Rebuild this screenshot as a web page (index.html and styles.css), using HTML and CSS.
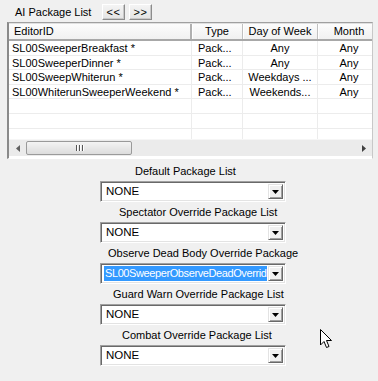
FILE: index.html
```html
<!DOCTYPE html>
<html>
<head>
<meta charset="utf-8">
<link rel="stylesheet" href="styles.css">
</head>
<body>
<div class="page">
  <div class="toolbar">
    <span class="title">AI Package List</span>
    <div class="navs">
      <button class="btn">&lt;&lt;</button>
      <button class="btn">&gt;&gt;</button>
    </div>
  </div>

  <div class="list">
    <div class="grid header">
      <div class="hcell c1">EditorID</div>
      <div class="hcell c2">Type</div>
      <div class="hcell c3">Day of Week</div>
      <div class="hcell c4">Month</div>
    </div>
    <div class="body">
      <div class="grid row"><div class="cell c1">SL00SweeperBreakfast *</div><div class="cell c2">Pack...</div><div class="cell c3">Any</div><div class="cell c4">Any</div></div>
      <div class="grid row"><div class="cell c1">SL00SweeperDinner *</div><div class="cell c2">Pack...</div><div class="cell c3">Any</div><div class="cell c4">Any</div></div>
      <div class="grid row"><div class="cell c1">SL00SweepWhiterun *</div><div class="cell c2">Pack...</div><div class="cell c3">Weekdays ...</div><div class="cell c4">Any</div></div>
      <div class="grid row"><div class="cell c1">SL00WhiterunSweeperWeekend *</div><div class="cell c2">Pack...</div><div class="cell c3">Weekends...</div><div class="cell c4">Any</div></div>
      <div class="grid row"><div class="cell c1"></div><div class="cell c2"></div><div class="cell c3"></div><div class="cell c4"></div></div>
      <div class="grid row"><div class="cell c1"></div><div class="cell c2"></div><div class="cell c3"></div><div class="cell c4"></div></div>
      <div class="grid row last"><div class="cell c1"></div><div class="cell c2"></div><div class="cell c3"></div><div class="cell c4"></div></div>
    </div>
    <div class="hscroll">
      <div class="arrow left"><svg width="4" height="7" viewBox="0 0 4 7"><path d="M4 0 L0 3.5 L4 7 Z" fill="#606060"/></svg></div>
      <div class="track">
        <div class="thumb"><span class="grip"></span><span class="grip"></span><span class="grip"></span></div>
      </div>
      <div class="arrow right"><svg width="4" height="7" viewBox="0 0 4 7"><path d="M0 0 L4 3.5 L0 7 Z" fill="#404040"/></svg></div>
    </div>
  </div>

  <div class="form">
    <div class="group">
      <div class="label l1">Default Package List</div>
      <div class="combo"><span class="val">NONE</span><span class="drop"><svg width="7" height="4" viewBox="0 0 7 4"><path d="M0 0 H7 L3.5 4 Z" fill="#000"/></svg></span></div>
    </div>
    <div class="group">
      <div class="label l2">Spectator Override Package List</div>
      <div class="combo"><span class="val">NONE</span><span class="drop"><svg width="7" height="4" viewBox="0 0 7 4"><path d="M0 0 H7 L3.5 4 Z" fill="#000"/></svg></span></div>
    </div>
    <div class="group">
      <div class="label l3">Observe Dead Body Override Package</div>
      <div class="combo"><span class="val sel">SL00SweeperObserveDeadOverrid</span><span class="drop"><svg width="7" height="4" viewBox="0 0 7 4"><path d="M0 0 H7 L3.5 4 Z" fill="#000"/></svg></span></div>
    </div>
    <div class="group">
      <div class="label l4">Guard Warn Override Package List</div>
      <div class="combo"><span class="val">NONE</span><span class="drop"><svg width="7" height="4" viewBox="0 0 7 4"><path d="M0 0 H7 L3.5 4 Z" fill="#000"/></svg></span></div>
    </div>
    <div class="group">
      <div class="label l5">Combat Override Package List</div>
      <div class="combo"><span class="val">NONE</span><span class="drop"><svg width="7" height="4" viewBox="0 0 7 4"><path d="M0 0 H7 L3.5 4 Z" fill="#000"/></svg></span></div>
    </div>
  </div>

  <svg class="cursor" width="13" height="20" viewBox="0 0 13 20"><path d="M0.5 0.5 L0.5 16 L4 12.5 L6.5 18.5 L9 17.5 L6.5 11.5 L11.5 11.5 Z" fill="#fff" stroke="#000" stroke-width="1" stroke-linejoin="miter"/></svg>
</div>
</body>
</html>
```

FILE: styles.css
```css
* { box-sizing: border-box; }
html, body { margin: 0; padding: 0; }
body {
  background: #f0f0f0;
  font-family: "Liberation Sans", Arial, sans-serif;
  font-size: 11px;
  color: #000;
  width: 378px;
  height: 381px;
  overflow: hidden;
}
.page { position: relative; width: 378px; height: 381px; }

.toolbar {
  display: flex;
  align-items: center;
  height: 22px;
  padding: 1px 0 0 15px;
}
.title { width: 87px; }
.navs { display: flex; gap: 4px; }
.btn {
  width: 23px;
  height: 16px;
  padding: 0;
  margin: 0;
  font-family: "Liberation Sans", Arial, sans-serif;
  font-size: 11px;
  line-height: 12px;
  background: linear-gradient(#f4f4f4, #e4e4e4);
  border: 1px solid;
  border-color: #ffffff #8c8c8c #8c8c8c #ffffff;
  box-shadow: inset -1px -1px 0 #c8c8c8;
  color: #000;
  letter-spacing: 0.5px;
}

.list {
  margin-left: 7px;
  width: 366px;
  height: 137px;
  border-top: 1px solid #a0a0a0;
  border-left: 2px solid #8a8a8a;
  border-right: 1px solid #c8c8c8;
  border-bottom: 1px solid #ffffff;
  background: #fff;
  display: flex;
  flex-direction: column;
  overflow: hidden;
  box-shadow: inset 0 1px 0 #e0e0e0;
}
.grid {
  display: grid;
  grid-template-columns: 183px 51px 75px 63px;
  width: 372px;
}
.header {
  height: 17px;
  background: linear-gradient(#fcfcfc, #f1f1f1);
  border-bottom: 2px solid #a8a8a8;
  margin-top: 1px;
}
.hcell {
  line-height: 15px;
  border-right: 1px solid #c0c0c0;
  box-shadow: 1px 0 0 #ffffff;
  white-space: nowrap;
  overflow: hidden;
}
.hcell.c1 { padding-left: 5px; border-right: 2px solid #b0b0b0; }
.hcell.c2, .hcell.c3 { text-align: center; }
.hcell.c4 { text-align: center; border-right: 1px solid #b8b8b8; }

.body { flex: 1; overflow: hidden; }
.row { height: 14.6px; }
.cell {
  line-height: 14px;
  border-bottom: 1px solid #ececec;
  border-right: 1px solid #ececec;
  white-space: nowrap;
  overflow: hidden;
}
.cell.c1 { padding-left: 3px; }
.cell.c2 { padding-left: 6px; }
.cell.c3 { text-align: center; }
.cell.c4 { text-align: center; padding-right: 0; }
.row.last .cell { border-bottom: none; }

.hscroll {
  height: 17px;
  display: flex;
  align-items: center;
  background: #ebebeb;
  border-top: 1px solid #f6f6f6;
  margin-bottom: 2px;
}
.arrow {
  width: 17px;
  height: 15px;
  display: flex;
  align-items: center;
  justify-content: center;
}
.track { flex: 1; height: 15px; display: flex; align-items: center; }
.thumb {
  width: 106px;
  height: 14px;
  border: 1px solid #9a9a9a;
  border-radius: 2px;
  background: linear-gradient(#f4f4f4, #dcdcdc);
  display: flex;
  justify-content: center;
  align-items: center;
  gap: 1px;
}
.grip { width: 1px; height: 6px; background: #555; box-shadow: 1px 0 0 #fff; }
.grip + .grip { margin-left: 1px; }

.form {
  display: flex;
  flex-direction: column;
  padding-top: 2px;
}
.group { display: flex; flex-direction: column; height: 41px; }
.label {
  height: 20px;
  line-height: 20px;
  white-space: nowrap;
}
.l1 { padding-left: 135px; }
.l2 { padding-left: 119px; }
.l3 { padding-left: 108px; }
.l4 { padding-left: 113px; }
.l5 { padding-left: 122px; }

.combo {
  margin-left: 100px;
  width: 186px;
  height: 21px;
  background: #fff;
  border: 1px solid;
  border-color: #a0a0a0 #ffffff #ffffff #a0a0a0;
  box-shadow: inset 1px 1px 0 #696969, inset -1px -1px 0 #e3e3e3;
  display: flex;
  align-items: center;
  padding: 2px 2px 2px 3px;
}
.val {
  flex: 1;
  height: 15px;
  line-height: 15px;
  padding-left: 2px;
  white-space: nowrap;
  overflow: hidden;
  font-size: 11.5px;
}
.val.sel {
  background: #3399ff;
  color: #fff;
  margin-right: 1px;
  padding-left: 1px;
  font-size: 11px;
  letter-spacing: -0.4px;
}
.drop {
  width: 15px;
  height: 15px;
  background: #f0f0f0;
  border: 1px solid;
  border-color: #e3e3e3 #696969 #696969 #e3e3e3;
  box-shadow: inset 1px 1px 0 #fff, inset -1px -1px 0 #a0a0a0;
  display: flex;
  align-items: center;
  justify-content: center;
}
.cursor { position: absolute; left: 320px; top: 329px; }
```
